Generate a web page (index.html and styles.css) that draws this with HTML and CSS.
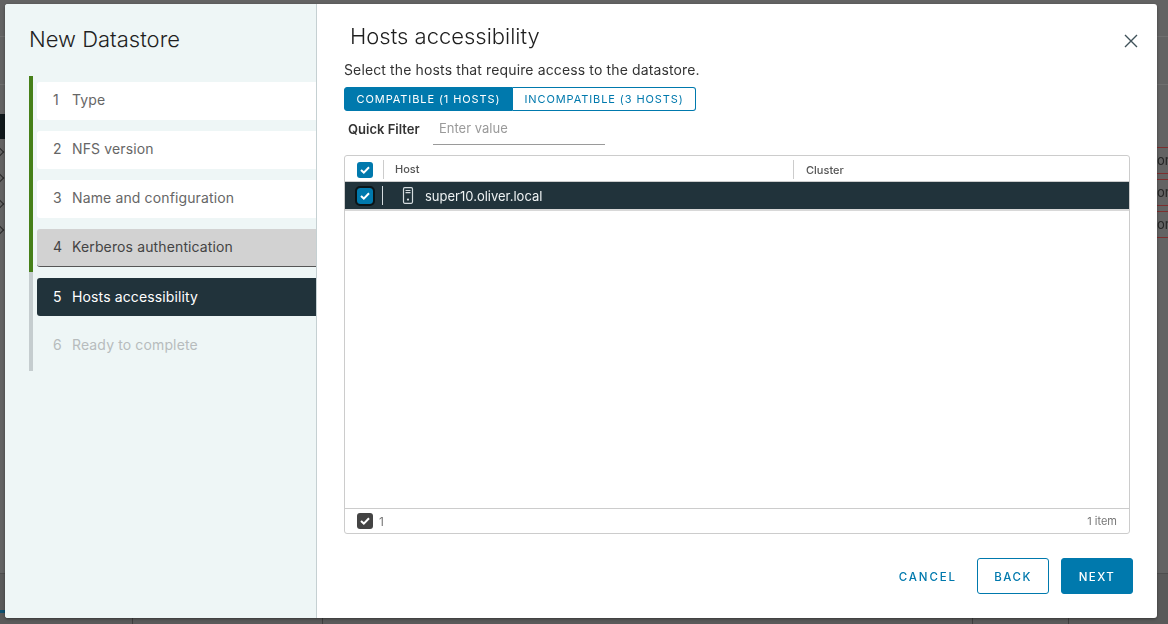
FILE: index.html
```html
<!DOCTYPE html>
<html lang="en">
<head>
    <meta charset="UTF-8">
    <meta name="viewport" content="width=device-width, initial-scale=1.0">
    <title>New Datastore</title>
    <link rel="stylesheet" href="styles.css">
</head>
<body>

    <!-- page behind the dialog, only the edges show -->
    <div class="backdrop">
        <div class="bg-rule rule-1"></div>
        <div class="bg-rule rule-2"></div>
        <div class="bg-bar"></div>
        <div class="bg-chevron chev-1"></div>
        <div class="bg-chevron chev-2"></div>
        <div class="bg-chevron chev-3"></div>
        <div class="bg-chevron chev-4"></div>
        <div class="bg-link link-1">on</div>
        <div class="bg-link link-2">on</div>
        <div class="bg-link link-3">on</div>
        <div class="bg-footer"></div>
        <div class="bg-col col-1"></div>
        <div class="bg-col col-2"></div>
        <div class="bg-col col-3"></div>
        <div class="bg-col col-4"></div>
        <div class="bg-tick"></div>
    </div>

    <div class="modal">
        <aside class="wizard-nav">
            <h2 class="wizard-title">New Datastore</h2>
            <ul class="steps">
                <li class="step done"><div class="step-box"><span class="num">1</span>Type</div></li>
                <li class="step done"><div class="step-box"><span class="num">2</span>NFS version</div></li>
                <li class="step done"><div class="step-box"><span class="num">3</span>Name and configuration</div></li>
                <li class="step done hover"><div class="step-box"><span class="num">4</span>Kerberos authentication</div></li>
                <li class="step active"><div class="step-box"><span class="num">5</span>Hosts accessibility</div></li>
                <li class="step disabled"><div class="step-box"><span class="num">6</span>Ready to complete</div></li>
            </ul>
        </aside>

        <main class="content">
            <button class="close" aria-label="Close">
                <svg width="14" height="14" viewBox="0 0 14 14"><path d="M1 1 L13 13 M13 1 L1 13" stroke="#3f5159" stroke-width="1.4" fill="none"/></svg>
            </button>
            <h3 class="content-title">Hosts accessibility</h3>
            <p class="subtitle">Select the hosts that require access to the datastore.</p>

            <div class="tabs">
                <button class="tab selected">COMPATIBLE (1 HOSTS)</button>
                <button class="tab">INCOMPATIBLE (3 HOSTS)</button>
            </div>

            <div class="filter">
                <label class="filter-label" for="quick">Quick Filter</label>
                <input class="filter-input" id="quick" placeholder="Enter value">
            </div>

            <div class="grid">
                <div class="grid-head">
                    <div class="cell-check">
                        <span class="check"><svg width="10" height="8" viewBox="0 0 10 8"><path d="M1 4 L3.8 6.6 L9 1.2" stroke="#fff" stroke-width="2" fill="none"/></svg></span>
                    </div>
                    <div class="col-host">Host</div>
                    <div class="col-cluster">Cluster</div>
                </div>
                <div class="grid-row">
                    <div class="cell-check">
                        <span class="check focused"><svg width="10" height="8" viewBox="0 0 10 8"><path d="M1 4 L3.8 6.6 L9 1.2" stroke="#fff" stroke-width="2" fill="none"/></svg></span>
                    </div>
                    <div class="row-host">
                        <svg class="host-icon" width="12" height="17" viewBox="0 0 12 17">
                            <rect x="1.5" y="0.7" width="9" height="15.6" rx="1.2" fill="none" stroke="#d5dcdf" stroke-width="1.2"/>
                            <path d="M3.5 3.5 H8.5 M3.5 5.7 H8.5" stroke="#d5dcdf" stroke-width="1.2"/>
                            <circle cx="6" cy="12.6" r="1.1" fill="#d5dcdf"/>
                        </svg>
                        super10.oliver.local
                    </div>
                </div>
                <div class="grid-body"></div>
                <div class="grid-foot">
                    <span class="check dark"><svg width="10" height="8" viewBox="0 0 10 8"><path d="M1 4 L3.8 6.6 L9 1.2" stroke="#fff" stroke-width="2" fill="none"/></svg></span>
                    <span class="foot-count">1</span>
                    <span class="foot-total">1 item</span>
                </div>
            </div>

            <div class="actions">
                <button class="btn btn-link">CANCEL</button>
                <button class="btn btn-outline">BACK</button>
                <button class="btn btn-primary">NEXT</button>
            </div>
        </main>
    </div>

</body>
</html>
```

FILE: styles.css
```css
* {
    box-sizing: border-box;
}
html, body {
    height: 100%;
}
body {
    margin: 0;
    overflow: hidden;
    background-color: #636363;
    font-family: Inter, "Noto Sans", sans-serif;
    color: #333;
}

/* page behind */
.backdrop {
    position: fixed;
    inset: 0;
    overflow: hidden;
}
.bg-rule {
    position: absolute;
    left: 0;
    right: 0;
    height: 1px;
    background-color: #6f6f6f;
}
.rule-1 { top: 36px; }
.rule-2 { top: 84px; }
.bg-bar {
    position: absolute;
    left: 0;
    top: 114px;
    width: 5px;
    height: 25px;
    background-color: #10191c;
}
.bg-chevron {
    position: absolute;
    left: -3px;
    width: 6px;
    height: 6px;
    border-top: 1px solid #2a2a2a;
    border-right: 1px solid #2a2a2a;
    transform: rotate(45deg);
}
.chev-1 { top: 149px; }
.chev-2 { top: 175px; }
.chev-3 { top: 201px; }
.chev-4 { top: 227px; }
.bg-link {
    position: absolute;
    left: 1157px;
    width: 11px;
    height: 27px;
    padding-top: 5px;
    overflow: hidden;
    white-space: nowrap;
    font-size: 13px;
    line-height: 15px;
    color: #262626;
    border-top: 1px solid #7c2f2f;
    border-bottom: 1px solid #7c2f2f;
}
.link-1 { top: 147px; }
.link-2 { top: 179px; }
.link-3 { top: 211px; }
.bg-footer {
    position: absolute;
    left: 0;
    right: 0;
    top: 573px;
    bottom: 0;
    background-color: #5a5a5a;
    border-top: 1px solid #4e4e4e;
}
.bg-col {
    position: absolute;
    top: 618px;
    bottom: 0;
    width: 1px;
    background-color: #3e3e3e;
}
.col-1 { left: 132px; }
.col-2 { left: 322px; }
.col-3 { left: 972px; }
.col-4 { left: 1068px; }
.bg-tick {
    position: absolute;
    left: 0;
    top: 610px;
    width: 5px;
    height: 3px;
    background-color: #0f4f6e;
}

/* dialog */
.modal {
    position: fixed;
    left: 5px;
    top: 4px;
    width: 1152px;
    height: 614px;
    display: flex;
    overflow: hidden;
    background-color: #fff;
    border-radius: 3px;
    box-shadow: 0 1px 3px rgba(0, 0, 0, 0.4);
}
.wizard-nav {
    width: 312px;
    flex: none;
    padding: 20px 0 0 24px;
    background-color: #eef6f6;
    border-right: 1px solid #c5d0d2;
}
.wizard-title {
    margin: 0;
    height: 52px;
    font-size: 22px;
    line-height: 30px;
    font-weight: 300;
    color: #1f1f1f;
}
.steps {
    list-style: none;
    margin: 0;
    padding: 0;
}
.step {
    padding: 6px 0 5px 4px;
    border-left: 4px solid #c5cdcf;
}
.step.done {
    border-left-color: #468019;
}
.disabled {
    padding-bottom: 6px;
}
.step-box {
    display: flex;
    align-items: center;
    height: 38px;
    padding: 0 0 3px 16px;
    font-size: 14px;
    letter-spacing: 0.13px;
    color: #666;
    border-radius: 3px 0 0 3px;
    background-color: #fff;
}
.num {
    width: 19px;
}
.hover .step-box {
    padding-bottom: 2px;
    color: #444;
    background-color: #d2d2d2;
    border-bottom: 1px solid #565656;
}
.active .step-box {
    padding-bottom: 2px;
    color: #fff;
    background-color: #21333b;
}
.disabled .step-box {
    color: #b7bcbd;
    background-color: transparent;
}

.content {
    position: relative;
    flex: 1;
    padding: 0 27px 0 27px;
    display: flex;
    flex-direction: column;
}
.close {
    position: absolute;
    top: 30px;
    right: 22px;
    padding: 0;
    line-height: 0;
    border: 0;
    background: none;
}
.content-title {
    margin: 17px 0 0 6px;
    font-size: 22px;
    line-height: 30px;
    font-weight: 300;
    color: #1f1f1f;
}
.subtitle {
    margin: 11px 0 0;
    font-size: 14px;
    line-height: 16px;
    letter-spacing: 0.13px;
    color: #333;
}
.tabs {
    display: flex;
    margin-top: 9px;
    height: 24px;
    width: 352px;
}
.tab {
    padding: 0;
    font-family: inherit;
    font-size: 11px;
    letter-spacing: 0.9px;
    color: #0079ad;
    background-color: #fff;
    border: 1px solid #0079ad;
    border-left: 0;
    border-radius: 0 3px 3px 0;
    flex: 1;
}
.tab.selected {
    flex: none;
    width: 169px;
    color: #fff;
    background-color: #0079ad;
    border-left: 1px solid #0079ad;
    border-radius: 3px 0 0 3px;
}
.filter {
    display: flex;
    align-items: center;
    height: 31px;
    margin-top: 3px;
    padding-left: 4px;
}
.filter-label {
    width: 85px;
    padding-bottom: 2px;
    font-size: 13px;
    font-weight: 600;
    color: #333;
}
.filter-input {
    width: 172px;
    height: 31px;
    padding: 0 6px 2px;
    font-family: inherit;
    font-size: 13px;
    color: #333;
    border: 0;
    border-bottom: 1px solid #9a9a9a;
    outline: none;
    background: none;
}
.filter-input::placeholder {
    color: #9a9a9a;
}

.grid {
    display: flex;
    flex-direction: column;
    width: 786px;
    height: 379px;
    margin-top: 10px;
    border: 1px solid #ccc;
    border-radius: 3px;
}
.grid-head {
    display: flex;
    align-items: center;
    height: 26px;
    padding-top: 2px;
    font-size: 11px;
    font-weight: 500;
    color: #555;
    border-bottom: 1px solid #ccc;
}
.cell-check {
    display: flex;
    align-items: center;
    justify-content: center;
    flex: none;
    width: 38px;
    height: 19px;
    padding-left: 3px;
    border-right: 1px solid #ccc;
}
.grid-head .cell-check {
    width: 39px;
    padding-left: 2px;
}
.col-host {
    width: 410px;
    height: 19px;
    line-height: 19px;
    padding-left: 11px;
    border-right: 1px solid #ccc;
}
.col-cluster {
    padding-left: 12px;
}
.grid-row {
    display: flex;
    align-items: center;
    height: 29px;
    flex: none;
    background-color: #21333b;
    border-bottom: 2px solid #d8d8d8;
}
.grid-row .cell-check {
    border-right-color: #d5dcdf;
}
.row-host {
    display: flex;
    align-items: center;
    padding-left: 19px;
    font-size: 13px;
    color: #eef2f3;
}
.host-icon {
    margin-right: 11px;
}
.check {
    display: flex;
    align-items: center;
    justify-content: center;
    width: 16px;
    height: 16px;
    flex: none;
    border-radius: 3px;
    background-color: #0079ad;
}
.check.focused {
    outline: 2px solid #0a1417;
    outline-offset: 0;
}
.check.dark {
    background-color: #444;
}
.grid-body {
    flex: 1;
}
.grid-foot {
    display: flex;
    align-items: center;
    flex: none;
    height: 25px;
    padding: 0 12px 0 12px;
    font-size: 11px;
    color: #777;
    border-top: 1px solid #ccc;
}
.foot-count {
    margin-left: 6px;
    font-size: 12px;
}
.foot-total {
    margin-left: auto;
}

.actions {
    display: flex;
    justify-content: flex-end;
    align-items: center;
    gap: 12px;
    width: 789px;
    margin-top: 24px;
}
.btn {
    height: 36px;
    width: 72px;
    padding: 2px 0 0;
    font-family: inherit;
    font-size: 11.5px;
    font-weight: 500;
    letter-spacing: 1.5px;
    border: 1px solid #0079ad;
    border-radius: 3px;
    color: #0079ad;
    background-color: #fff;
    cursor: pointer;
}
.btn-link {
    width: auto;
    border: 0;
    margin-right: 8px;
    letter-spacing: 1.9px;
}
.btn-primary {
    color: #fff;
    background-color: #0079ad;
}
```
